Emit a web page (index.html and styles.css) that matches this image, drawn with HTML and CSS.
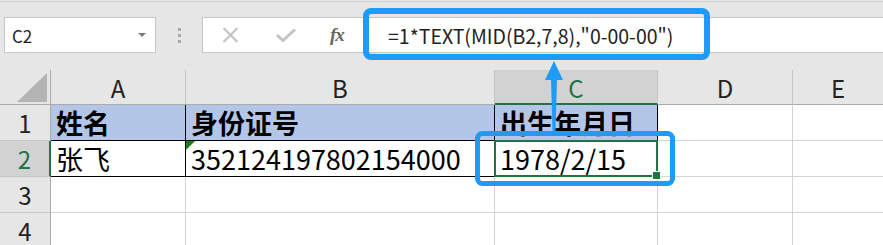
FILE: index.html
```html
<!DOCTYPE html>
<html lang="zh">
<head>
<meta charset="utf-8">
<title>Excel</title>
<link rel="stylesheet" href="styles.css">
</head>
<body>
<div class="app">
  <div class="topline"></div>
  <div class="fbar">
    <div class="namebox">
      <span class="nb-text">C2</span>
      <svg class="caret" width="8" height="4" viewBox="0 0 8 4"><path d="M0 0H8L4 4Z" fill="#7a7a7a"/></svg>
    </div>
    <div class="grip"><i></i><i></i><i></i></div>
    <div class="formula">
      <div class="fbtns">
        <svg class="ico-x" width="17" height="16" viewBox="0 0 17 16"><path d="M1.5 1L15.5 15M15.5 1L1.5 15" stroke="#c4c4c4" stroke-width="2.2" fill="none"/></svg>
        <svg class="ico-ok" width="20" height="14" viewBox="0 0 20 14"><path d="M1 7L7 12.5L19 1.5" stroke="#c4c4c4" stroke-width="3" fill="none"/></svg>
        <span class="fx">fx</span>
      </div>
      <div class="ftext">=1*TEXT(MID(B2,7,8),"0-00-00")</div>
    </div>
  </div>
  <div class="sheet">
    <div class="corner"><svg width="30" height="29" viewBox="0 0 30 29"><path d="M0 29H30V0Z" fill="#b4b4b4"/></svg></div>
    <div class="ch">A</div>
    <div class="ch">B</div>
    <div class="ch ch-sel">C</div>
    <div class="ch">D</div>
    <div class="ch ch-last">E</div>

    <div class="rh">1</div>
    <div class="cell hd tb">姓名</div>
    <div class="cell hd tb">身份证号</div>
    <div class="cell hd tb">出生年月日</div>
    <div class="cell"></div>
    <div class="cell last"></div>

    <div class="rh rh-sel">2</div>
    <div class="cell tb">张飞</div>
    <div class="cell tb num"><span class="flag"></span>352124197802154000</div>
    <div class="cell tb sel">1978/2/15</div>
    <div class="cell"></div>
    <div class="cell last"></div>

    <div class="rh">3</div>
    <div class="cell"></div>
    <div class="cell"></div>
    <div class="cell"></div>
    <div class="cell"></div>
    <div class="cell last"></div>

    <div class="rh">4</div>
    <div class="cell"></div>
    <div class="cell"></div>
    <div class="cell"></div>
    <div class="cell"></div>
    <div class="cell last"></div>
  </div>
  <svg class="annot" width="883" height="245" viewBox="0 0 883 245">
    <rect x="366" y="11" width="341" height="46" rx="5" fill="none" stroke="#1d9bf6" stroke-width="6"/>
    <rect x="477.5" y="133.5" width="195" height="50" rx="5" fill="none" stroke="#1d9bf6" stroke-width="5"/>
    <path d="M554 61L545 80H563Z" fill="#1d9bf6"/>
    <path d="M551 79H557L555.5 131H552.5Z" fill="#1d9bf6"/>
  </svg>
</div>
</body>
</html>
```
FILE: styles.css
```css
* { box-sizing: border-box; }
html, body { margin: 0; padding: 0; }
body {
  background: #e6e6e6;
  font-family: "Noto Sans CJK SC", "Noto Sans", sans-serif;
  width: 883px;
  height: 245px;
  overflow: hidden;
}
.app {
  position: relative;
  width: 883px;
  height: 245px;
  overflow: hidden;
}
.topline {
  border-top: 1px solid #d2d2d2;
  margin-top: 1px;
  height: 16px;
}
.fbar {
  display: flex;
  align-items: stretch;
  height: 36px;
  margin-bottom: 17px;
}
.namebox {
  margin-left: 4px;
  width: 152px;
  background: #fff;
  border: 1px solid #c6c6c6;
  display: flex;
  align-items: center;
  justify-content: space-between;
  padding: 0 9px 0 7px;
}
.nb-text {
  font-size: 17px;
  color: #222;
  line-height: 1;
}
.grip {
  width: 46px;
  display: flex;
  flex-direction: column;
  align-items: center;
  justify-content: center;
  gap: 3px;
}
.grip i {
  display: block;
  width: 3px;
  height: 3px;
  background: #a8a8a8;
}
.formula {
  flex: 1;
  background: #fff;
  border: 1px solid #c6c6c6;
  border-right: none;
  display: flex;
  align-items: center;
}
.fbtns {
  display: flex;
  align-items: center;
  width: 182px;
  padding-left: 19px;
}
.ico-x { margin-right: 37px; }
.ico-ok { margin-right: 34px; }
.fx {
  font-family: "Liberation Serif", "DejaVu Serif", serif;
  font-style: italic;
  font-weight: bold;
  font-size: 19px;
  color: #666;
  letter-spacing: -1px;
}
.ftext {
  font-size: 19.5px;
  color: #222;
  padding-left: 3px;
  white-space: nowrap;
}
.sheet {
  display: grid;
  grid-template-columns: 51px 135px 309px 163px 135px 1fr;
  grid-template-rows: 35px 36px 36px 36px 36px;
  background: #fff;
}
.corner {
  background: #e6e6e6;
  border-right: 1px solid #ababab;
  border-bottom: 1px solid #ababab;
  display: flex;
  align-items: flex-end;
  justify-content: flex-end;
  padding: 0 3px 2px 0;
}
.ch {
  background: #e6e6e6;
  border-right: 1px solid #c6c6c6;
  border-bottom: 1px solid #ababab;
  font-size: 24px;
  color: #222;
  display: flex;
  align-items: center;
  justify-content: center;
  line-height: 1;
  padding-top: 2px;
}
.ch-last { border-right: none; }
.ch-sel {
  background: #d2d2d2;
  color: #217346;
  border-bottom: 2px solid #217346;
}
.rh {
  background: #e6e6e6;
  border-right: 1px solid #ababab;
  border-bottom: 1px solid #c6c6c6;
  font-size: 24px;
  color: #222;
  display: flex;
  align-items: center;
  justify-content: center;
  line-height: 1;
}
.rh-sel {
  background: #d2d2d2;
  color: #217346;
  border-right: 2px solid #217346;
}
.cell {
  position: relative;
  border-right: 1px solid #d4d4d4;
  border-bottom: 1px solid #d4d4d4;
  font-size: 27px;
  color: #000;
  display: flex;
  align-items: center;
  padding-left: 5px;
  white-space: nowrap;
  line-height: 1;
}
.cell.last { border-right: none; }
.cell.hd {
  background: #b4c6e7;
  font-weight: bold;
}
.cell.tb {
  border-right-color: #000;
  border-bottom-color: #000;
}
.flag {
  position: absolute;
  left: 0;
  top: 0;
  width: 0;
  height: 0;
  border-top: 9px solid #1a7f1a;
  border-right: 9px solid transparent;
}
.sel::after {
  content: "";
  position: absolute;
  left: -1px;
  top: -1px;
  right: -1px;
  bottom: -1px;
  border: 2px solid #217346;
}
.sel::before {
  content: "";
  position: absolute;
  right: -4px;
  bottom: -4px;
  width: 7px;
  height: 7px;
  background: #217346;
  border: 1px solid #fff;
  z-index: 1;
}
.annot {
  position: absolute;
  left: 0;
  top: 0;
  pointer-events: none;
}
```
